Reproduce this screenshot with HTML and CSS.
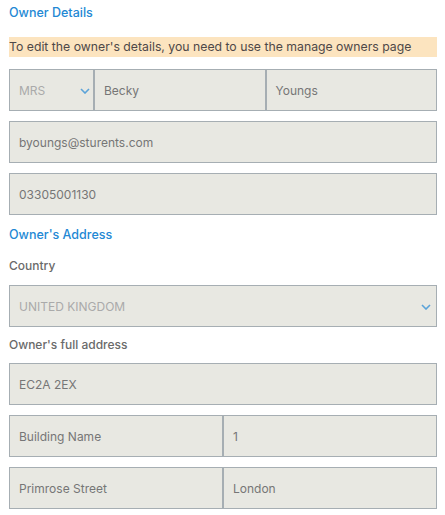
FILE: index.html
```html
<!DOCTYPE html>
<html>
<head>
<meta charset="utf-8">
<link rel="stylesheet" href="styles.css">
</head>
<body>
<div class="page">
  <h2 class="section-title first">Owner Details</h2>
  <div class="notice">To edit the owner's details, you need to use the manage owners page</div>

  <div class="row">
    <div class="field select title-select"><span class="muted">MRS</span>
      <svg class="chev" width="10" height="6" viewBox="0 0 10 6"><path d="M1 1l4 4 4-4" fill="none" stroke="#5ba3d9" stroke-width="1.6"/></svg>
    </div>
    <div class="field grow">Becky</div>
    <div class="field grow">Youngs</div>
  </div>
  <div class="row"><div class="field grow">byoungs@sturents.com</div></div>
  <div class="row"><div class="field grow">03305001130</div></div>

  <h2 class="section-title second">Owner's Address</h2>
  <div class="label label-country">Country</div>
  <div class="row">
    <div class="field grow select"><span class="muted">UNITED KINGDOM</span>
      <svg class="chev" width="10" height="6" viewBox="0 0 10 6"><path d="M1 1l4 4 4-4" fill="none" stroke="#5ba3d9" stroke-width="1.6"/></svg>
    </div>
  </div>
  <div class="label label-full">Owner's full address</div>
  <div class="row"><div class="field grow">EC2A 2EX</div></div>
  <div class="row">
    <div class="field half">Building Name</div>
    <div class="field grow">1</div>
  </div>
  <div class="row">
    <div class="field half">Primrose Street</div>
    <div class="field grow">London</div>
  </div>
</div>
</body>
</html>
```

FILE: styles.css
```css
* { box-sizing: border-box; }
html, body { margin: 0; padding: 0; background: #fff; }
body {
  font-family: Inter, "Noto Sans", "Liberation Sans", sans-serif;
  font-size: 12px;
  color: #707070;
}
.page {
  padding: 5px 8px 0 9px;
}
.section-title {
  margin: 0;
  font-size: 12.5px;
  line-height: 16px;
  font-weight: 500;
  color: #2388d4;
}
.section-title.first { margin-bottom: 16px; }
.section-title.second { margin-top: 12px; }
.notice {
  background: #fce4bf;
  color: #4e4848;
  height: 20px;
  line-height: 20px;
  font-size: 12.25px;
  margin-bottom: 0;
}
.row {
  display: flex;
  margin-bottom: 10px;
}
.notice + .row { margin-top: 12px; }
.field {
  height: 42px;
  border: 1px solid #a6aeb3;
  background: #e8e8e2;
  display: flex;
  align-items: center;
  padding: 0 9px;
  color: #767676;
}
.grow { flex: 1; }
.select { justify-content: space-between; padding-right: 5px; }
.title-select { width: 85px; padding-right: 3px; }
.half { width: 214px; }
.muted { color: #aaaaaa; }
.chev { display: block; margin-top: 2px; }
.label {
  font-weight: 500;
  color: #6a6a6a;
  line-height: 16px;
}
.label-country { margin-top: 15px; margin-bottom: 11px; }
.label-full { margin-top: 0; margin-bottom: 10px; }
```
